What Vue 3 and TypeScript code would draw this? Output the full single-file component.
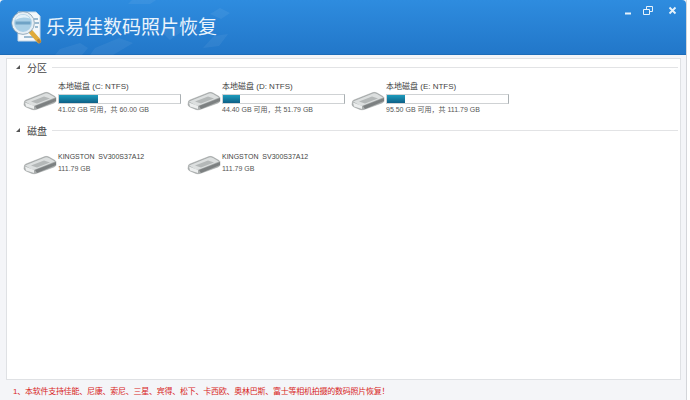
<script setup lang="ts">
interface Vol { name: string; pct: number; sub: string }
const vols: Vol[] = [
  { name: '本地磁盘 (C: NTFS)', pct: 32, sub: '41.02 GB 可用，共 60.00 GB' },
  { name: '本地磁盘 (D: NTFS)', pct: 14, sub: '44.40 GB 可用，共 51.79 GB' },
  { name: '本地磁盘 (E: NTFS)', pct: 15, sub: '95.50 GB 可用，共 111.79 GB' },
]
const disks = [
  { name: 'KINGSTON  SV300S37A12', sub: '111.79 GB' },
  { name: 'KINGSTON  SV300S37A12', sub: '111.79 GB' },
]
</script>

<template>
  <div class="win">
    <header class="head">
      <svg class="tiles" width="300" height="55" viewBox="0 0 300 55">
        <path d="M132 0h24l-6 4h-22zM220 8l10 5-9 6-11-5zM214 36l14-2-9 12-16 2zM95 48l24-10 14 5-20 12H90zM160 30l16-5 8 5-14 10zM60 49l20-6 8 5-6 7H55z" fill="#fff" opacity=".06" />
      </svg>
      <svg class="logo" width="36" height="36" viewBox="0 0 36 36">
        <path d="M7 2h18l4 4v25H7z" fill="#f4f8fb" stroke="#c9d8e4" />
        <path d="M23 9h4M24 13h4M24 17h3M13 27h10" stroke="#7fa6c4" stroke-width="1.5" />
        <path d="M20 22l8 9" stroke="#e0ab3a" stroke-width="4.5" stroke-linecap="round" />
        <path d="M27.500 30.500l1 1" stroke="#b5803a" stroke-width="3" stroke-linecap="round" />
        <circle cx="12" cy="13" r="10" fill="#a9cfe6" stroke="#e6eef4" stroke-width="2.2" />
        <circle cx="12" cy="13" r="11.400" fill="none" stroke="#7d99ad" stroke-width="0.8" />
        <path d="M4.500 11.500h15v3h-15z" fill="#6fa3c6" />
        <path d="M4 10a8.500 8.500 0 0 1 15-1.500a14 10 0 0 0-15 1.500z" fill="#e4f1f9" />
      </svg>
      <h1 class="title">乐易佳数码照片恢复</h1>
      <div class="controls">
        <svg width="10" height="10" viewBox="0 0 10 10"><path d="M1 7.500h6" stroke="#e6f2fb" stroke-width="2" /></svg>
        <svg width="10" height="10" viewBox="0 0 10 10"><path d="M3.500 3V.5h6v5H7M.5 3.500h6v5h-6z" fill="none" stroke="#e6f2fb" /></svg>
        <svg width="10" height="10" viewBox="0 0 10 10"><path d="M1.500 1.500l6 6M7.500 1.500l-6 6" stroke="#e6f2fb" stroke-width="1.800" /></svg>
      </div>
    </header>

    <main class="panel">
      <div class="sec">
        <span class="tri"></span><span class="sec-name">分区</span><span class="rule"></span>
      </div>
      <div class="row vols">
        <div v-for="v in vols" :key="v.name" class="item">
          <svg class="drive" width="34" height="20" viewBox="0 0 34 20">
            <path d="M1.500 10.500Q1 10 3 9L22 1.500Q24 1 26 2L32 5.500Q33 6 33 7.500V10Q33 11 31 12L13 18.500Q11 19 9 18.500L3 16Q1 15 1 13.500z" fill="#a9adad" stroke="#9a9e9e" stroke-width=".5" />
            <path d="M2 10.500L22 2.500Q24 2 26 3L32 6.500 12 14.500Q11 15 9 14.500z" fill="#dcdfdf" />
            <path d="M8 10.500L21 5.500 27 7.500 14 12.500z" fill="#b4b8b8" />
            <path d="M12 15L33 7V10L14 18z" fill="#7c8081" />
            <path d="M2 11.500L11 15V18L3 15.500z" fill="#eceeee" />
          </svg>
          <div class="info">
            <div class="name">{{ v.name }}</div>
            <div class="bar"><div class="fill" :style="{ width: v.pct + '%' }"></div></div>
            <div class="sub">{{ v.sub }}</div>
          </div>
        </div>
      </div>
      <div class="sec sec2">
        <span class="tri"></span><span class="sec-name">磁盘</span><span class="rule"></span>
      </div>
      <div class="row disks">
        <div v-for="(d, i) in disks" :key="i" class="item">
          <svg class="drive" width="34" height="20" viewBox="0 0 34 20">
            <path d="M1.500 10.500Q1 10 3 9L22 1.500Q24 1 26 2L32 5.500Q33 6 33 7.500V10Q33 11 31 12L13 18.500Q11 19 9 18.500L3 16Q1 15 1 13.500z" fill="#a9adad" stroke="#9a9e9e" stroke-width=".5" />
            <path d="M2 10.500L22 2.500Q24 2 26 3L32 6.500 12 14.500Q11 15 9 14.500z" fill="#dcdfdf" />
            <path d="M8 10.500L21 5.500 27 7.500 14 12.500z" fill="#b4b8b8" />
            <path d="M12 15L33 7V10L14 18z" fill="#7c8081" />
            <path d="M2 11.500L11 15V18L3 15.500z" fill="#eceeee" />
          </svg>
          <div class="info disk-info">
            <div class="name small">{{ d.name }}</div>
            <div class="sub">{{ d.sub }}</div>
          </div>
        </div>
      </div>
    </main>

    <footer class="foot">1、本软件支持佳能、尼康、索尼、三星、宾得、松下、卡西欧、奥林巴斯、富士等相机拍摄的数码照片恢复！</footer>
  </div>
</template>

<style>
html, body { margin: 0; background: #fff; }
</style>

<style scoped>
.win {
  width: 687px;
  height: 400px;
  box-sizing: border-box;
  background: #f4f5f8;
  border-right: 1px solid #d4d6da;
  display: flex;
  flex-direction: column;
  font-family: "Liberation Sans", "Noto Sans CJK SC", sans-serif;
  overflow: hidden;
}
.head {
  position: relative;
  height: 55px;
  flex: none;
  box-sizing: border-box;
  background: linear-gradient(#2e8cdf, #2277c9);
  border-bottom: 1px solid #1d6cb8;
  border-radius: 4px 4px 0 0;
  display: flex;
  align-items: flex-start;
  padding: 10px 0 0 11px;
  color: #fff;
}
.tiles { position: absolute; left: 0; top: 0; }
.logo { flex: none; position: relative; }
.title {
  position: relative;
  margin: 7px 0 0 -1px;
  font-size: 19px;
  line-height: 22px;
  font-weight: 400;
  color: #eaf4fc;
}
.controls {
  position: relative;
  margin-left: auto;
  margin-top: -4px;
  padding-right: 8px;
  display: flex;
}
.controls svg:nth-child(2) { margin-left: 9px; }
.controls svg:nth-child(3) { margin-left: 15px; }
.panel {
  flex: 1;
  margin: 3px 5px 0 6px;
  background: #fff;
  border: 1px solid #dfe1e4;
  padding: 0 2px 0 9px;
  min-height: 0;
}
.sec {
  height: 14px;
  margin-top: 1px;
  display: flex;
  align-items: center;
}
.sec2 { margin-top: 7px; }
.tri {
  width: 0;
  height: 0;
  border-left: 4px solid transparent;
  border-bottom: 4px solid #555;
  margin-right: 7px;
}
.sec-name {
  font-size: 10px;
  color: #444;
}
.rule {
  flex: 1;
  height: 1px;
  margin-left: 5px;
  background: #e2e3e5;
}
.row { display: flex; }
.vols { margin-top: 7px; }
.disks { margin-top: 13px; }
.item {
  width: 164px;
  margin-left: 7px;
  margin-right: -7px;
  display: flex;
  align-items: center;
}
.drive { flex: none; margin: 5px 0 0 0; }
.info { margin-left: 1px; color: #444; }
.name {
  font-size: 8px;
  line-height: 12px;
}
.name.small { font-size: 7px; white-space: pre; }
.bar {
  width: 121px;
  height: 8px;
  margin-top: 1px;
  background: #fff;
  border: 1px solid #cfd2d4;
  border-right-color: #aab0b3;
}
.fill {
  height: 100%;
  background: linear-gradient(#1d9cbd, #0d5f86);
}
.sub {
  margin-top: 0;
  font-size: 7px;
  line-height: 12px;
  color: #555;
}
.foot {
  height: 20px;
  flex: none;
  box-sizing: border-box;
  padding-left: 13px;
  font-size: 8px;
  line-height: 23px;
  letter-spacing: -0.25px;
  color: #d81e1c;
  white-space: nowrap;
}
</style>
